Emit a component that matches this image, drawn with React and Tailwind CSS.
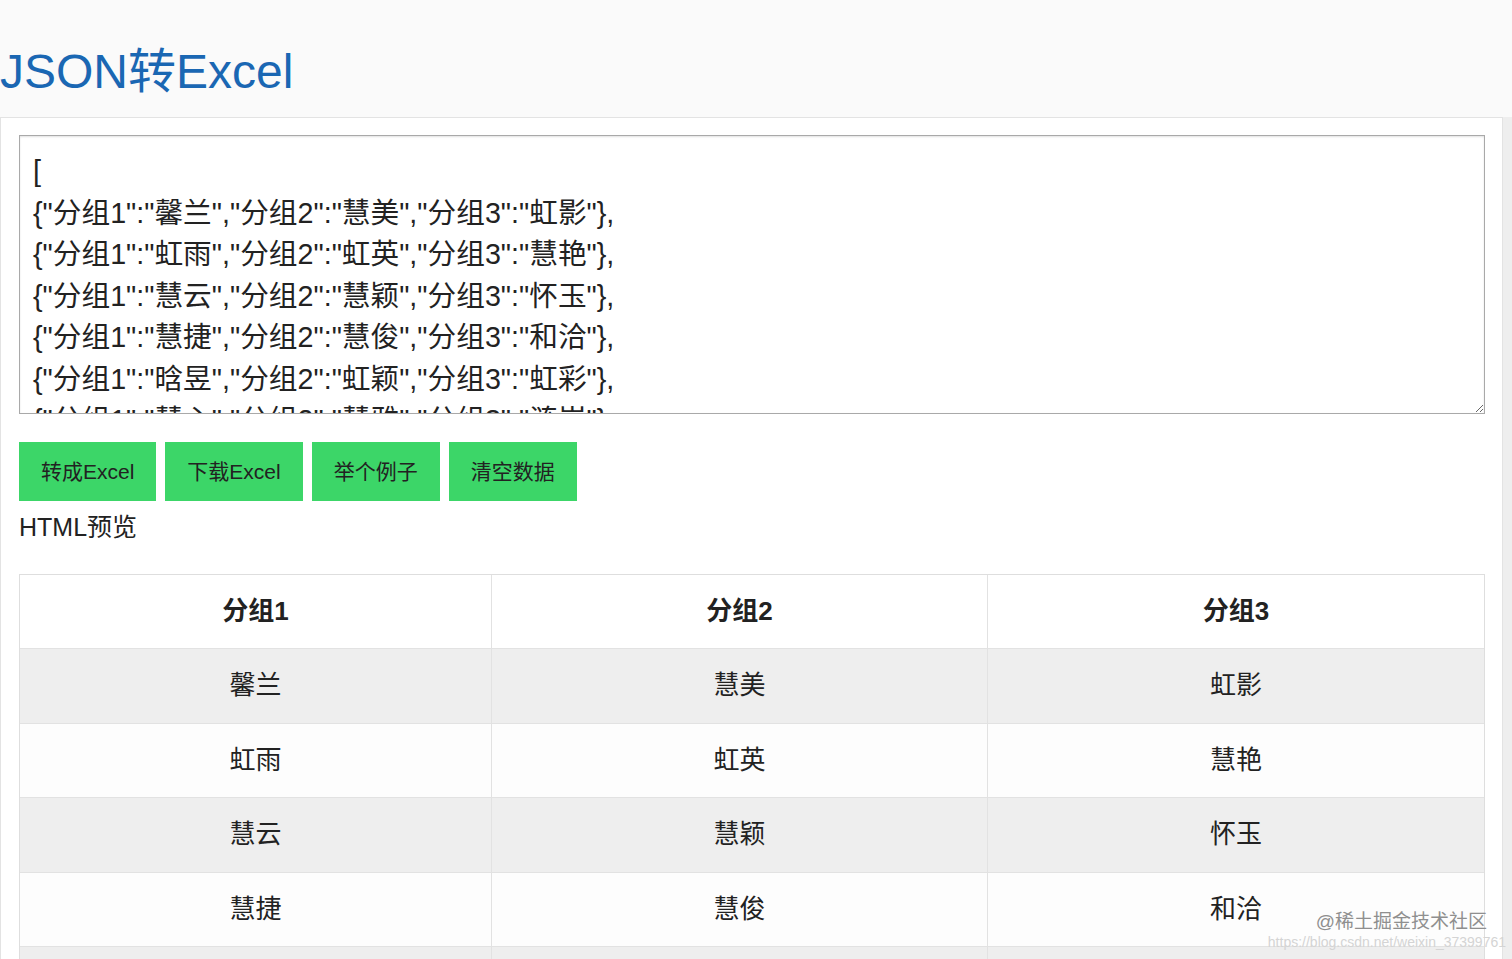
import React from "react";

const rows = [
  ["馨兰", "慧美", "虹影"],
  ["虹雨", "虹英", "慧艳"],
  ["慧云", "慧颖", "怀玉"],
  ["慧捷", "慧俊", "和洽"],
  ["晗昱", "虹颖", "虹彩"],
  ["慧心", "慧雅", "涟岚"],
];

const jsonText =
  "[\n" +
  rows
    .map((r) => `{"分组1":"${r[0]}","分组2":"${r[1]}","分组3":"${r[2]}"},`)
    .join("\n") +
  "\n]";

const font = "font-['Liberation_Sans','Noto_Sans_CJK_SC',sans-serif]";

const App = () => {
  return (
    <div className={`relative h-[959px] overflow-hidden bg-[#fafafa] ${font}`}>
      {/* Title */}
      <div className="h-[117px] pt-[44px]">
        <h1 className="text-[48px] leading-[55px] text-[#1a67b3]">JSON转Excel</h1>
      </div>

      <div className="flex">
        {/* Main panel */}
        <div className="w-[1503px] shrink-0 bg-white border-t border-l border-r border-[#e3e3e3] pl-[18px] pr-[17px] pt-[17px] h-[842px]">
          <textarea
            readOnly
            defaultValue={jsonText}
            className={`block w-full h-[279px] overflow-hidden border border-[#a9a9a9] shadow-[inset_0_1px_2px_rgba(0,0,0,0.12)] bg-white pl-[13px] pt-[15px] text-[28.7px] leading-[41.5px] text-[#222] outline-none ${font}`}
          />

          {/* Buttons */}
          <div className="flex gap-[9px] mt-[28px]">
            {["转成Excel", "下载Excel", "举个例子", "清空数据"].map((label) => (
              <button
                key={label}
                className="h-[59px] px-[22px] bg-[#3cd668] text-[21px] text-[#222]"
              >
                {label}
              </button>
            ))}
          </div>

          <p className="mt-[8px] text-[25px] leading-[36px] text-[#222]">HTML预览</p>

          {/* Preview table */}
          <div className="mt-[29px] border-t border-l border-r border-[#dedede]">
            <div className="grid grid-cols-[472px_496px_1fr] h-[74px] bg-white border-b border-[#e2e2e2]">
              {["分组1", "分组2", "分组3"].map((h, i) => (
                <div
                  key={h}
                  className={`flex items-center justify-center text-[26px] font-bold text-[#222] ${i < 2 ? "border-r border-[#e2e2e2]" : ""}`}
                >
                  {h}
                </div>
              ))}
            </div>
            {rows.slice(0, 5).map((r, idx) => (
              <div
                key={idx}
                className={`grid grid-cols-[472px_496px_1fr] h-[74.5px] border-b border-[#e2e2e2] ${idx % 2 === 0 ? "bg-[#eeeeee]" : "bg-[#fdfdfd]"}`}
              >
                {r.map((c, i) => (
                  <div
                    key={i}
                    className={`flex items-center justify-center text-[26px] text-[#222] ${i < 2 ? "border-r border-[#e2e2e2]" : ""}`}
                  >
                    {c}
                  </div>
                ))}
              </div>
            ))}
          </div>
        </div>

        {/* Right gutter */}
        <div className="flex-1 bg-[#eeeeee] h-[842px]" />
      </div>

      {/* Watermark */}
      <div className="absolute right-[25px] top-[909px] text-[19px] leading-[26px] text-[#8f8f8f]">
        @稀土掘金技术社区
      </div>
      <div className="absolute right-[6px] top-[933px] text-[14px] leading-[18px] text-[#d4d4d4]">
        https://blog.csdn.net/weixin_37399761
      </div>
    </div>
  );
};

export default App;
